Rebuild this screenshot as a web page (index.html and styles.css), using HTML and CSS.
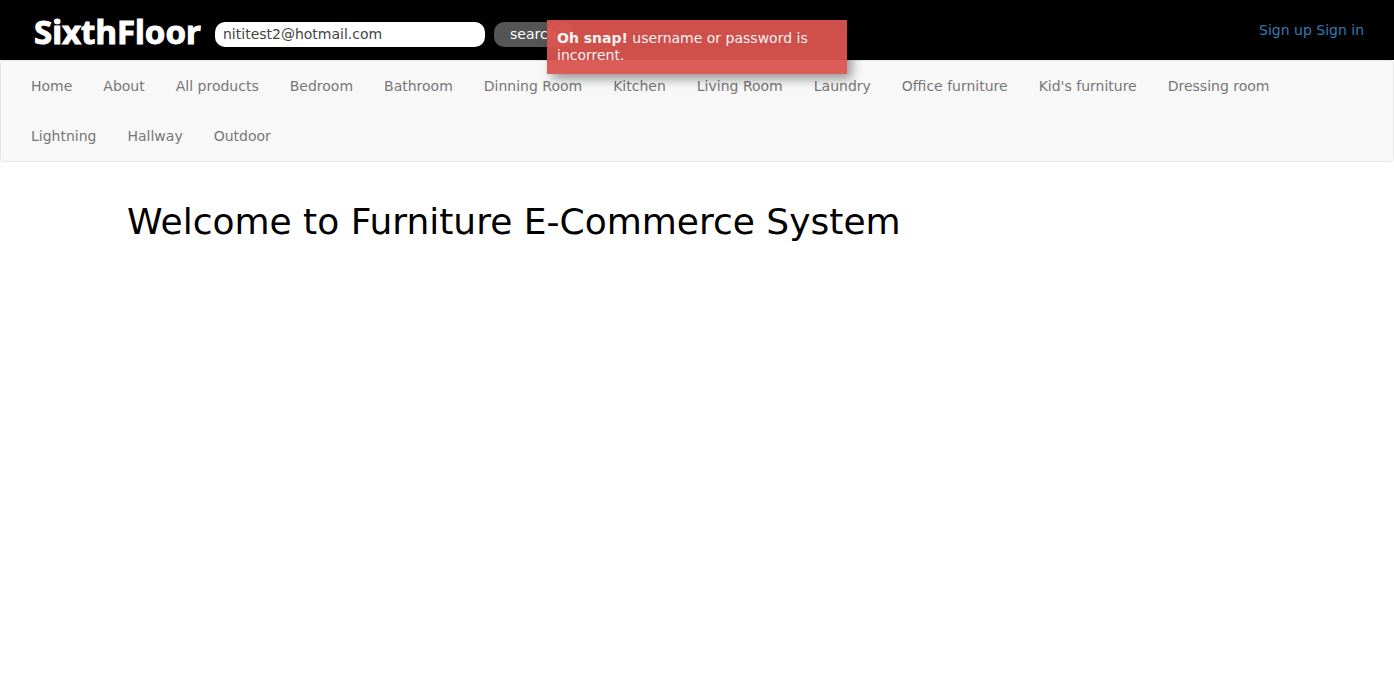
FILE: index.html
```html
<!DOCTYPE html>
<html lang="en">
<head>
<meta charset="utf-8">
<title>SixthFloor</title>
<link rel="stylesheet" href="styles.css">
</head>
<body>
<header class="topbar">
  <a class="logo" href="#">SixthFloor</a>
  <form class="search">
    <input class="search-input" type="text" aria-label="Search products" value="nititest2@hotmail.com">
    <button class="search-button" type="button">search</button>
  </form>
  <div class="account"><a href="#">Sign up</a> <a href="#">Sign in</a></div>
</header>
<nav class="navbar">
  <ul class="nav-list">
    <li><a href="#">Home</a></li>
    <li><a href="#">About</a></li>
    <li><a href="#">All products</a></li>
    <li><a href="#">Bedroom</a></li>
    <li><a href="#">Bathroom</a></li>
    <li><a href="#">Dinning Room</a></li>
    <li><a href="#">Kitchen</a></li>
    <li><a href="#">Living Room</a></li>
    <li><a href="#">Laundry</a></li>
    <li><a href="#">Office furniture</a></li>
    <li><a href="#">Kid's furniture</a></li>
    <li><a href="#">Dressing room</a></li>
    <li><a href="#">Lightning</a></li>
    <li><a href="#">Hallway</a></li>
    <li><a href="#">Outdoor</a></li>
  </ul>
</nav>
<main class="container">
  <h1>Welcome to Furniture E-Commerce System</h1>
</main>
<div class="toast" role="alert"><strong>Oh snap!</strong> username or password is incorrent.</div>
</body>
</html>
```
FILE: styles.css
```css
* {
  box-sizing: border-box;
}

body {
  margin: 0;
  font-family: "DejaVu Sans", sans-serif;
  font-size: 14px;
  line-height: 20px;
  color: #000;
  background: #fff;
}

a {
  color: #337ab7;
  text-decoration: none;
}

.topbar {
  display: flex;
  align-items: flex-start;
  height: 60px;
  padding: 0 30px 0 34px;
  background: #000;
}

.logo {
  width: 181px;
  padding-top: 12px;
  font-family: "Noto Sans", "Open Sans", sans-serif;
  font-size: 33px;
  font-weight: 700;
  line-height: 40px;
  color: #fff;
  -webkit-text-stroke: 1px #fff;
}

.search {
  display: flex;
  gap: 9px;
  padding-top: 22px;
}

.search-input,
.search-button {
  height: 25px;
  border: 0;
  border-radius: 10px;
  font: inherit;
}

.search-input {
  width: 270px;
  padding: 0 8px 2px;
  color: #444;
  background: #fff;
}

.search-button {
  padding: 0 16px 2px;
  color: #fff;
  background: #555;
}

.account {
  margin-left: auto;
  padding-top: 20px;
}

.navbar {
  border: 1px solid #e7e7e7;
  border-radius: 4px;
  background: #f8f8f8;
}

.nav-list {
  display: flex;
  flex-wrap: wrap;
  column-gap: 1px;
  margin: 0;
  padding: 0 15px;
  list-style: none;
}

.nav-list a {
  display: block;
  padding: 15px;
  color: #777;
}

.container {
  max-width: 1170px;
  margin: 40px auto 0;
  padding: 0 15px;
}

h1 {
  margin: 0;
  font-size: 36px;
  font-weight: 400;
  line-height: 40px;
}

.toast {
  position: absolute;
  top: 20px;
  left: 50%;
  width: 300px;
  margin-left: -150px;
  padding: 10px;
  line-height: 17px;
  color: #fff;
  background: #db5550;
  box-shadow: 5px 5px 10px rgba(0, 0, 0, 0.4);
  opacity: 0.95;
}
```
